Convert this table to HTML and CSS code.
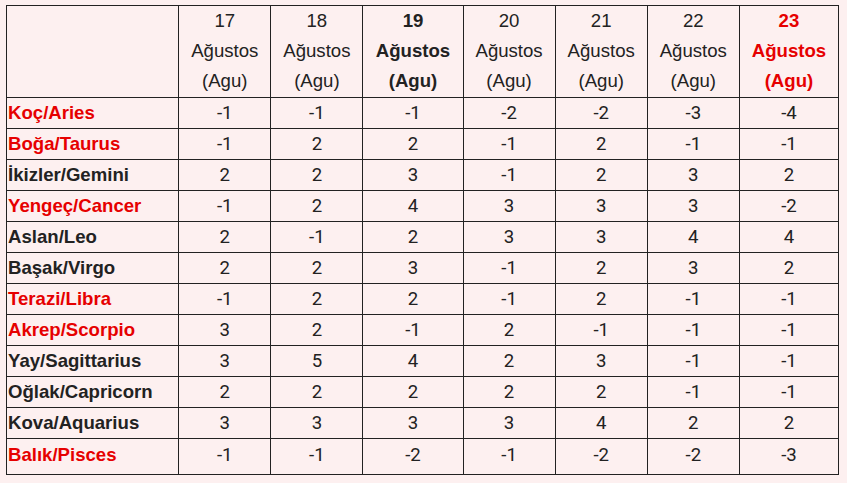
FILE: index.html
```html
<!DOCTYPE html>
<html lang="tr">
<head>
<meta charset="utf-8">
<title>Burç Tablosu</title>
<link rel="stylesheet" href="styles.css">
</head>
<body>
<table class="tbl">
<colgroup>
<col class="c-sign"><col class="c-day"><col class="c-day"><col class="c-wide"><col class="c-day"><col class="c-day"><col class="c-day"><col class="c-wide2">
</colgroup>
<thead>
<tr>
<th></th>
<th>17<br>Ağustos<br>(Agu)</th>
<th>18<br>Ağustos<br>(Agu)</th>
<th class="bold">19<br>Ağustos<br>(Agu)</th>
<th>20<br>Ağustos<br>(Agu)</th>
<th>21<br>Ağustos<br>(Agu)</th>
<th>22<br>Ağustos<br>(Agu)</th>
<th class="bold red">23<br>Ağustos<br>(Agu)</th>
</tr>
</thead>
<tbody>
<tr><td class="sign red">Koç/Aries</td><td>-1</td><td>-1</td><td>-1</td><td>-2</td><td>-2</td><td>-3</td><td>-4</td></tr>
<tr><td class="sign red">Boğa/Taurus</td><td>-1</td><td>2</td><td>2</td><td>-1</td><td>2</td><td>-1</td><td>-1</td></tr>
<tr><td class="sign">İkizler/Gemini</td><td>2</td><td>2</td><td>3</td><td>-1</td><td>2</td><td>3</td><td>2</td></tr>
<tr><td class="sign red">Yengeç/Cancer</td><td>-1</td><td>2</td><td>4</td><td>3</td><td>3</td><td>3</td><td>-2</td></tr>
<tr><td class="sign">Aslan/Leo</td><td>2</td><td>-1</td><td>2</td><td>3</td><td>3</td><td>4</td><td>4</td></tr>
<tr><td class="sign">Başak/Virgo</td><td>2</td><td>2</td><td>3</td><td>-1</td><td>2</td><td>3</td><td>2</td></tr>
<tr><td class="sign red">Terazi/Libra</td><td>-1</td><td>2</td><td>2</td><td>-1</td><td>2</td><td>-1</td><td>-1</td></tr>
<tr><td class="sign red">Akrep/Scorpio</td><td>3</td><td>2</td><td>-1</td><td>2</td><td>-1</td><td>-1</td><td>-1</td></tr>
<tr><td class="sign">Yay/Sagittarius</td><td>3</td><td>5</td><td>4</td><td>2</td><td>3</td><td>-1</td><td>-1</td></tr>
<tr><td class="sign">Oğlak/Capricorn</td><td>2</td><td>2</td><td>2</td><td>2</td><td>2</td><td>-1</td><td>-1</td></tr>
<tr><td class="sign">Kova/Aquarius</td><td>3</td><td>3</td><td>3</td><td>3</td><td>4</td><td>2</td><td>2</td></tr>
<tr class="last"><td class="sign red">Balık/Pisces</td><td>-1</td><td>-1</td><td>-2</td><td>-1</td><td>-2</td><td>-2</td><td>-3</td></tr>
</tbody>
</table>
</body>
</html>
```
FILE: styles.css
```css
html, body {
  margin: 0;
  padding: 0;
  background: #fdf0f0;
}
body {
  padding: 5px 6px;
  font-family: "Liberation Sans", Arial, sans-serif;
  color: #222;
  font-size: 18.6px;
}
.tbl {
  border-collapse: collapse;
  table-layout: fixed;
  width: 833px;
}
.c-sign { width: 172px; }
.c-day { width: 92px; }
.c-wide { width: 100px; }
.c-wide2 { width: 99px; }
.tbl th, .tbl td {
  border: 1px solid #222;
  padding: 0;
  text-align: center;
  line-height: 30px;
  font-weight: normal;
}
.tbl td {
  font-family: Roboto, "Liberation Sans", sans-serif;
}
.tbl th {
  line-height: 30px;
  padding-bottom: 1px;
}
.tbl th:first-child {
  padding: 0;
}
.tbl td.sign {
  font-family: "Liberation Sans", Arial, sans-serif;
  text-align: left;
  padding-left: 1px;
  font-weight: bold;
}
.bold { font-weight: bold !important; }
.red { color: #e60000; }
.tbl tr.last td {
  padding-top: 1px;
  padding-bottom: 4px;
}
```
